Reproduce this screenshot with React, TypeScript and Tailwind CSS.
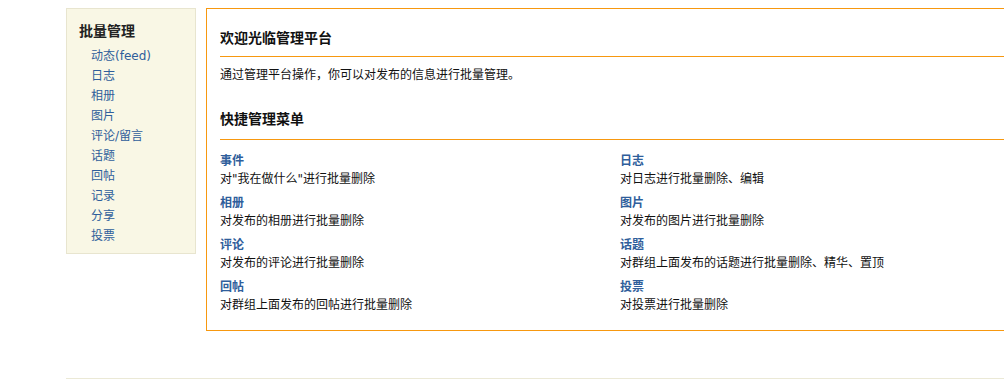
import React from "react";

const sideLinks = ["动态(feed)", "日志", "相册", "图片", "评论/留言", "话题", "回帖", "记录", "分享", "投票"];

const items: [string, string][] = [
  ["事件", "对\"我在做什么\"进行批量删除"],
  ["日志", "对日志进行批量删除、编辑"],
  ["相册", "对发布的相册进行批量删除"],
  ["图片", "对发布的图片进行批量删除"],
  ["评论", "对发布的评论进行批量删除"],
  ["话题", "对群组上面发布的话题进行批量删除、精华、置顶"],
  ["回帖", "对群组上面发布的回帖进行批量删除"],
  ["投票", "对投票进行批量删除"],
];

export default function App() {
  return (
    <div
      className="w-full min-h-[384px] overflow-hidden bg-white pl-[66px] pt-[8px] text-[12px] text-[#111]"
      style={{ fontFamily: '"DejaVu Sans", "Noto Sans CJK SC", sans-serif' }}
    >
      <div className="flex items-start w-[1100px]">
        <div className="w-[130px] shrink-0 border border-[#e8e5cf] bg-[#f9f7e5] pl-[12px] pt-[12px] pb-[7px]">
          <div className="text-[14px] font-bold leading-[20px] text-[#222]">批量管理</div>
          <ul className="mt-[5px] pl-[12px]">
            {sideLinks.map((l) => (
              <li key={l} className="leading-[20px] text-[#2f5e9b]">
                {l}
              </li>
            ))}
          </ul>
        </div>
        <div className="ml-[10px] w-[860px] shrink-0 border border-[#f7980f] pl-[13px] pt-[19px] pb-[16px]">
          <h2 className="border-b border-[#f7980f] pb-[8px] text-[14px] font-bold leading-[20px] text-[#111]">
            欢迎光临管理平台
          </h2>
          <p className="mt-[9px] leading-[18px]">通过管理平台操作，你可以对发布的信息进行批量管理。</p>
          <h2 className="mt-[25px] border-b border-[#f7980f] pb-[10px] text-[14px] font-bold leading-[20px] text-[#111]">
            快捷管理菜单
          </h2>
          <div className="mt-[12px] grid grid-cols-[400px_1fr] gap-y-[6px]">
            {items.map(([t, d]) => (
              <div key={t}>
                <div className="font-bold leading-[18px] text-[#2f5e9b]">{t}</div>
                <div className="leading-[18px]">{d}</div>
              </div>
            ))}
          </div>
        </div>
      </div>
      <div className="mt-[47px] h-[6px] w-[1100px] border-t border-[#ebe9d6]" />
    </div>
  );
}
